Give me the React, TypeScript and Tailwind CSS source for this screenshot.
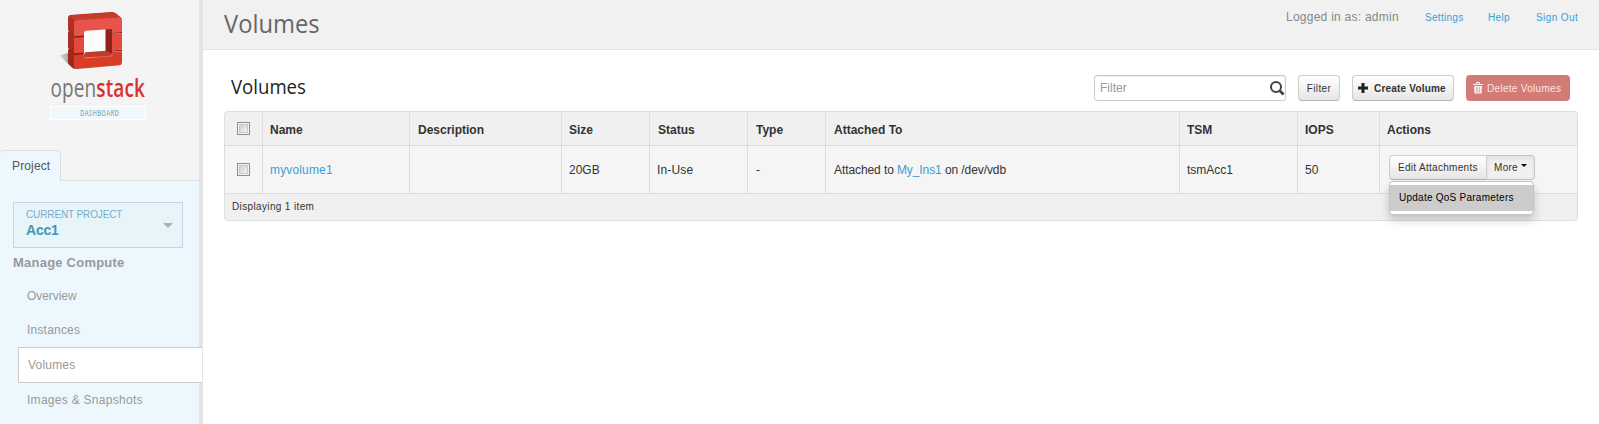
import React from "react";

function Logo() {
  return (
    <svg className="block" width="110" height="120" viewBox="45 5 110 120">
      <defs>
        <linearGradient id="shade" x1="1" y1="0" x2="0" y2="0.2">
          <stop offset="0" stopColor="#777" />
          <stop offset="1" stopColor="#ddd" />
        </linearGradient>
        <linearGradient id="side" x1="0" y1="0" x2="0" y2="1">
          <stop offset="0" stopColor="#b93329" />
          <stop offset="1" stopColor="#9c2418" />
        </linearGradient>
      </defs>
      <path d="M59.500 55.500 L68 53 L75 69 L72 68 Z" fill="url(#shade)" />
      <path d="M68 17.500 Q68 15.500 70 15 L112 12 Q114 12 116 13.500 L122 18.500 L118 24 L76 68.500 Q74.500 69 73 68 L69 64.500 Q68 63.500 68 62 Z" fill="url(#side)" />
      <path d="M69 16 Q69.500 15.300 71 15.200 L112 12.300 Q114 12.300 115.500 13.500 L121.500 18.300 L77 21 Z" fill="#c43c2a" />
      <path d="M84 30 L107 28.500 V52 L84 54 Z" fill="#fcfcfc" />
      <path d="M105.500 29 L112 28 V55 L105.500 51 Z" fill="#8f2219" />
      <path d="M84 57.500 L85 52.300 L106 50.800 L112 54.800 V57 Z" fill="#bd3c2a" />
      <path d="M74 22.500 Q74 20.500 76 20.300 L119 17.600 Q122 17.600 122 20.500 V32 L112 32.600 V29 L86 30.800 Q84 31 84 33 V35.500 L74 36 Z" fill="#e8544c" />
      <path d="M74 37.500 L84 37 V52.500 L74 53.500 Z M112 34 L122 33.400 V49.500 L112 50.500 Z" fill="#e34a3c" />
      <path d="M74 55 L84 54 V58 L112 56 V52 L122 51.200 V62 Q122 65 119.500 65.300 L77 69 Q74 69 74 66.500 Z" fill="#d93d27" />
      <path d="M68 30.500 L74 35.800 M68 49 L74 54" fill="none" stroke="#8c1e15" strokeWidth="0.700" />
      <path d="M74 36.800 L84 36.300 M74 54.200 L84 53.400 M112 33.200 L122 32.700 M112 51.200 L122 50.400" fill="none" stroke="#8c1e15" strokeWidth="1.200" />
      <path d="M67.500 30 l2 1 l-2 1z M67.500 48 l2 1 l-2 1z" fill="#f4f4f4" />
      <path d="M84 53 V58 L112 56 V53" fill="none" stroke="#ee857a" strokeWidth="0.600" />
      <text transform="translate(50.500 97) scale(0.760 1)" fontFamily="'Open Sans', sans-serif" fontSize="25" fontWeight="500" fill="#777" textLength="124.300">
        open<tspan fill="#da2f2d" fontWeight="600">stack</tspan>
      </text>
      <rect x="50.500" y="106.500" width="95" height="13" fill="#f1f8fb" stroke="#fff" />
      <text transform="translate(80 116.200) scale(0.700 1)" fontFamily="'Open Sans', sans-serif" fontSize="8.500" fontWeight="600" fill="#8fb0bd" textLength="55.700">DASHBOARD</text>
    </svg>
  );
}

function Checkbox() {
  return (
    <span className="block size-[13px] border border-[#8e8f8f] bg-[#f4f4f4] p-px">
      <span className="block size-full border border-[#c6c9ce] bg-linear-to-br from-[#c9cdd4] to-[#f6f6f6]" />
    </span>
  );
}

function Sidebar() {
  return (
    <aside className="flex h-full w-[203px] shrink-0 flex-col border-r-4 border-[#e4e4e4] bg-[#f4f4f4]">
      <div className="h-[150px] pt-[5px] pl-[45px]">
        <Logo />
      </div>
      <div className="flex h-[31px] shrink-0">
        <div className="w-[61px] rounded-t-[4px] border border-b-0 border-l-0 border-[#dcdcdc] bg-[#ecf8fe] pt-[7px] pl-[12px] text-[12px] leading-4 tracking-[0.140px] text-[#555]">
          Project
        </div>
        <div className="flex-1 border-b border-[#dcdcdc]" />
      </div>
      <div className="flex-1 bg-[#ecf8fe] pt-[21px] pl-[13px]">
        <div className="flex h-[46px] w-[170px] items-center justify-between border border-[#bed9e5] bg-[#e7f4fa] pr-[9px] pl-[12px]">
          <div className="-mt-[3px]">
            <div className="text-[10px] leading-[13px] tracking-[-0.350px] text-[#76aec8]"><span className="tracking-[-0.120px]">CURRENT PROJECT</span></div>
            <div className="text-[14px] leading-[18px] font-bold tracking-[-0.200px] text-[#4695b5]">Acc1</div>
          </div>
          <span className="mt-px border-x-[5px] border-t-[5px] border-x-transparent border-t-[#a5b3bb]" />
        </div>
        <div className="mt-[6px] h-[18px] text-[13px] leading-[18px] font-bold tracking-[0.230px] text-[#999]">Manage Compute</div>
        <nav className="text-[12px] leading-[35px] tracking-[0.200px] text-[#999]">
          <div className="mt-[7px] h-[34px] pl-[14px] tracking-[-0.050px]">Overview</div>
          <div className="h-[34px] pl-[14px]">Instances</div>
          <div className="-mr-[3px] ml-[5px] h-[36px] border border-r-0 border-[#ccc] bg-white pl-[9px]">Volumes</div>
          <div className="h-[34px] pl-[14px] tracking-[0.280px]">Images &amp; Snapshots</div>
        </nav>
      </div>
    </aside>
  );
}

function Header() {
  return (
    <header className="flex h-[50px] shrink-0 justify-between border-b border-[#e4e4e4] bg-[#f1f1f1] pl-[21px]">
      <h1 className="origin-left scale-x-[0.950] pt-[3px] font-['Open_Sans',sans-serif] text-[25px] leading-[40px] text-[#666]">Volumes</h1>
      <div className="flex pt-[9px] text-[10px] leading-4 tracking-[0.300px] text-[#3a9ed6]">
        <span className="w-[139px] text-[12px] tracking-[0.250px] text-[#888]">Logged in as: admin</span>
        <a className="mt-px w-[63px]">Settings</a>
        <a className="mt-px w-[48px]">Help</a>
        <a className="mt-px w-[63px] tracking-[0.400px]">Sign Out</a>
      </div>
    </header>
  );
}

function Toolbar() {
  return (
    <div className="flex h-[61px] items-start pt-[25px] pr-[29px] pl-[28px]">
      <h2 className="-mt-[3px] origin-left scale-x-[0.930] font-['Open_Sans',sans-serif] text-[20px] leading-[30px] text-[#222]">Volumes</h2>
      <div className="ml-auto flex h-[26px] w-[192px] items-center justify-between rounded-[3px] border border-[#ccc] bg-white pl-[5px] text-[12px] text-[#999] shadow-[inset_0_1px_1px_rgba(0,0,0,0.080)]">
        <span>Filter</span>
        <svg width="16" height="16" viewBox="0 0 16 16" fill="none" stroke="#444">
          <circle cx="7" cy="7" r="5" strokeWidth="2" />
          <path d="M10.500 10.500 L14.500 14.500" strokeWidth="2.800" />
        </svg>
      </div>
      <div className="ml-[12px] flex h-[26px] w-[42px] items-center justify-center rounded-[4px] border border-[#ccc] border-b-[#b3b3b3] bg-linear-to-b from-white to-[#e6e6e6] text-[10px] tracking-[0.350px] text-[#333]">Filter</div>
      <div className="ml-[12px] flex h-[26px] w-[102px] items-center rounded-[4px] border border-[#ccc] border-b-[#b3b3b3] bg-linear-to-b from-white to-[#e6e6e6] pl-[5px] text-[10px] font-bold tracking-[0.200px] text-[#333]">
        <svg className="mr-[6px]" width="10" height="10" viewBox="0 0 10 10"><path d="M3.500 0h3v3.500h3.500v3h-3.500v3.500h-3v-3.500h-3.500v-3h3.500z" fill="#222" /></svg>
        Create Volume
      </div>
      <div className="ml-[12px] flex h-[26px] w-[104px] items-center rounded-[4px] bg-[#d47b76] pl-[7px] text-[10px] tracking-[0.300px] text-[#f8e6e5]">
        <svg className="mr-[4px]" width="10" height="12" viewBox="0 0 10 12" fill="none" stroke="#fbeeed">
          <path d="M0 2.500h10M3.500 2V.5h3V2" />
          <path d="M1 4h8l-.5 7.500h-7z" fill="#fbeeed" stroke="none" />
          <path d="M3.500 5v5.500M5 5v5.500M6.500 5v5.500" stroke="#d47b76" strokeWidth="0.500" />
        </svg>
        Delete Volumes
      </div>
    </div>
  );
}

function RowActions() {
  return (
    <div className="relative ml-[2px] flex h-[25px] text-[10px] leading-[23px] tracking-[0.300px] text-[#333]">
      <div className="w-[98px] rounded-l-[4px] border border-[#ccc] border-b-[#b3b3b3] bg-linear-to-b from-white to-[#e6e6e6] pl-[8px]">Edit Attachments</div>
      <div className="flex w-[48px] rounded-r-[4px] border border-l-0 border-[#c5c5c5] bg-[#f0f0f0] pl-[7px] shadow-[inset_0_2px_4px_rgba(0,0,0,0.080)]">
        More
        <span className="mt-[8px] ml-[3px] h-0 border-x-[3px] border-t-[3px] border-x-transparent border-t-black" />
      </div>
      <div className="absolute top-[26px] left-0 z-10 h-[34px] w-[145px] rounded-[4px] border border-[#c3c3c3] bg-white py-[3px] shadow-[0_5px_10px_rgba(0,0,0,0.200)]">
        <div className="h-[26px] bg-[#ccc] pl-[9px] leading-[26px] tracking-[0.250px] text-black">Update QoS Parameters</div>
      </div>
    </div>
  );
}

const columns = "grid grid-cols-[37px_147px_152px_88px_98px_78px_354px_118px_82px_198px]";
const cell = "flex items-center border-l border-[#ddd] pl-[7px]";
const wideCell = "flex items-center border-l border-[#ddd] pl-[8px]";
const headings = [
  { label: "Name", wide: false },
  { label: "Description", wide: true },
  { label: "Size", wide: false },
  { label: "Status", wide: true },
  { label: "Type", wide: true },
  { label: "Attached To", wide: true },
  { label: "TSM", wide: false },
  { label: "IOPS", wide: false },
  { label: "Actions", wide: false },
];

function VolumesTable() {
  return (
    <div className="ml-[21px] w-[1354px] rounded-[4px] border border-[#ddd] bg-[#f0f0f0] text-[12px] text-[#333]">
      <div className={`${columns} h-[33px] font-bold`}>
        <div className="flex items-center pl-[12px]"><Checkbox /></div>
        {headings.map((h) => (
          <div key={h.label} className={`${h.wide ? wideCell : cell} pt-[3px]`}>{h.label}</div>
        ))}
      </div>
      <div className={`${columns} h-[49px] border-y border-[#ddd] bg-[#f5f5f5]`}>
        <div className="flex items-center pl-[12px]"><Checkbox /></div>
        <div className={`${cell} tracking-[0.150px] text-[#3a9ed6]`}>myvolume1</div>
        <div className={cell} />
        <div className={cell}>20GB</div>
        <div className={`${cell} tracking-[0.150px]`}>In-Use</div>
        <div className={wideCell}>-</div>
        <div className={`${wideCell} tracking-[-0.090px] whitespace-pre`}>Attached to <a className="text-[#3a9ed6]">My_Ins1</a> on /dev/vdb</div>
        <div className={cell}>tsmAcc1</div>
        <div className={cell}>50</div>
        <div className={`${cell} items-start pt-[9px]`}><RowActions /></div>
      </div>
      <div className="h-[26px] pl-[7px] text-[10px] leading-[26px] tracking-[0.360px]">Displaying 1 item</div>
    </div>
  );
}

export default function App() {
  return (
    <div className="flex h-[424px] w-[1599px] overflow-hidden bg-white font-['Liberation_Sans',Arial,sans-serif]">
      <Sidebar />
      <main className="flex min-w-0 flex-1 flex-col">
        <Header />
        <Toolbar />
        <VolumesTable />
      </main>
    </div>
  );
}
